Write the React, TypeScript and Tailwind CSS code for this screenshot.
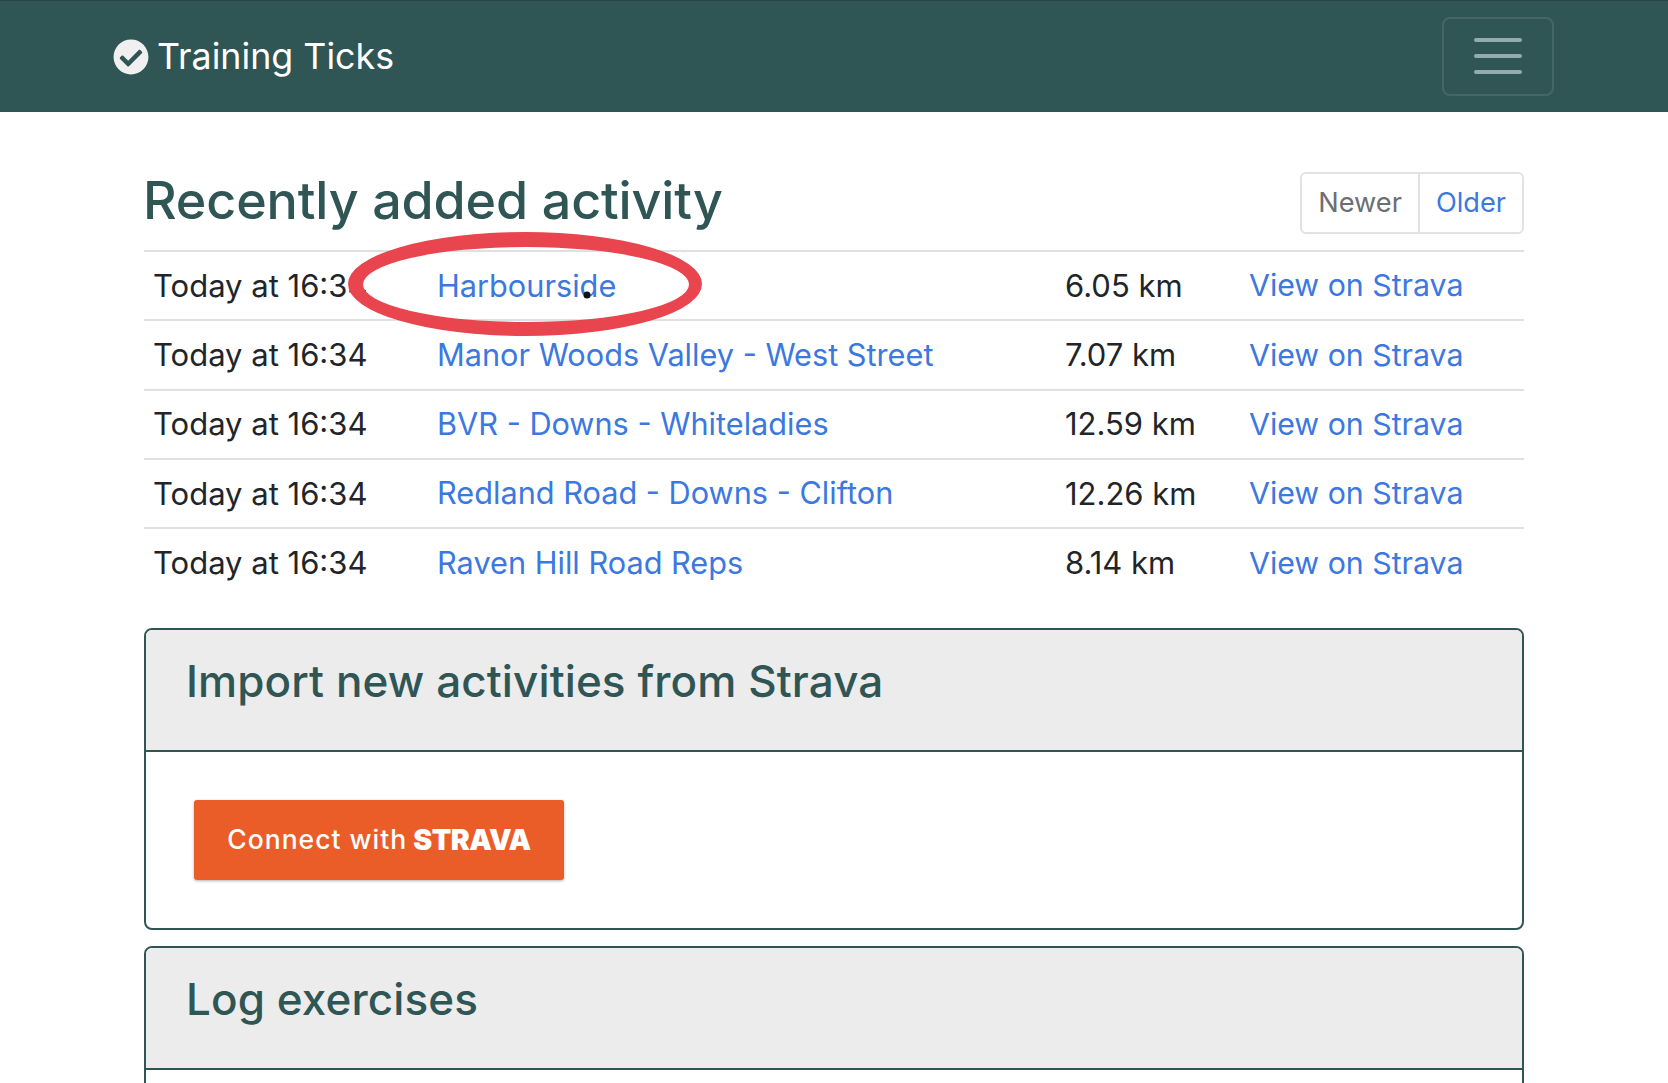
import React from "react";
import { FaCheckCircle } from "react-icons/fa";

const activities = [
  { time: "Today at 16:34", name: "Harbourside", distance: "6.05 km" },
  { time: "Today at 16:34", name: "Manor Woods Valley - West Street", distance: "7.07 km" },
  { time: "Today at 16:34", name: "BVR - Downs - Whiteladies", distance: "12.59 km" },
  { time: "Today at 16:34", name: "Redland Road - Downs - Clifton", distance: "12.26 km" },
  { time: "Today at 16:34", name: "Raven Hill Road Reps", distance: "8.14 km" },
];

export default function App() {
  return (
    <div className="relative h-[1083px] overflow-hidden bg-white text-[#212529] font-['Inter',sans-serif]">
      <nav className="h-[112px] bg-[#2f5555] border-t border-[#254645] flex items-center justify-between pl-[113px] pr-[114px]">
        <a className="flex items-center gap-[8px] text-white text-[35.8px]">
          <FaCheckCircle className="w-[36px] h-[36px] text-[#f0f0f0]" />
          <span className="-translate-y-[0.5px]">Training Ticks</span>
        </a>
        <button className="w-[112px] h-[79px] mb-[1px] rounded-lg border-2 border-white/10 flex flex-col items-center justify-center gap-[12px]">
          <span className="block w-[48px] h-[4px] rounded-sm bg-[#93abac]" />
          <span className="block w-[48px] h-[4px] rounded-sm bg-[#93abac]" />
          <span className="block w-[48px] h-[4px] rounded-sm bg-[#93abac]" />
        </button>
      </nav>

      <main className="mx-[144px] pt-[60px]">
        <div className="flex items-start justify-between h-[78px]">
          <h1 className="-ml-[1px] text-[52px] leading-[58px] font-medium text-[#2f5555] tracking-[-0.13px]">
            Recently added activity
          </h1>
          <div className="flex h-[62px] rounded-md border-2 border-[#e2e2e2] text-[27.2px]">
            <span className="flex items-center px-[16px] text-[#6c6f72] border-r-2 border-[#e2e2e2]">Newer</span>
            <a className="flex items-center px-[16px] text-[#3b78e0]">Older</a>
          </div>
        </div>

        <table className="w-full table-fixed text-[31px] border-collapse">
          <colgroup>
            <col className="w-[284px]" />
            <col className="w-[627px]" />
            <col className="w-[184px]" />
            <col />
          </colgroup>
          <tbody>
            {activities.map((a) => (
              <tr key={a.name} className="h-[69.25px] border-t-2 border-[#dfe0e1]">
                <td className="pl-[10px] pt-[1px] -translate-x-[1px]">{a.time}</td>
                <td className="pl-[9px] text-[30.7px] text-[#3b78e0]">{a.name}</td>
                <td className="pl-[10px] pt-[1px]">{a.distance}</td>
                <td className="pl-[10px] pt-[1px] text-[30.3px] text-[#3b78e0]">View on Strava</td>
              </tr>
            ))}
          </tbody>
        </table>

        <section className="mt-[31px] h-[302px] rounded-lg border-2 border-[#2f5555]">
          <h2 className="h-[122px] bg-[#ececec] rounded-t-md border-b-2 border-[#2f5555] px-[40px] pt-[23px] text-[44px] leading-[56px] font-medium text-[#2f5555] tracking-[0.1px]">
            Import new activities from Strava
          </h2>
          <div className="pt-[48px] pl-[48px]">
            <div className="w-[370px] h-[80px] rounded-[3px] bg-[#ea5d29] shadow-[0_1px_3px_rgba(0,0,0,0.3)] flex items-center justify-center gap-[6px] text-white">
              <span className="text-[26.5px] font-medium tracking-[1px]">Connect with</span>
              <span className="text-[28.5px] font-black tracking-[-0.5px]">STRAVA</span>
            </div>
          </div>
        </section>

        <section className="mt-[16px] h-[300px] rounded-lg border-2 border-[#2f5555]">
          <h2 className="h-[122px] bg-[#ececec] rounded-t-md border-b-2 border-[#2f5555] px-[40px] pt-[23px] text-[44px] leading-[56px] font-medium text-[#2f5555] tracking-[0.1px]">
            Log exercises
          </h2>
        </section>
      </main>

      {/* hand drawn annotation over the first row */}
      <svg className="absolute left-[340px] top-[225px]" width="370" height="120" viewBox="0 0 370 120">
        <path
          fillRule="evenodd"
          fill="#e8454e"
          d="M8 59a177 52 0 1 0 354 0a177 52 0 1 0 -354 0ZM23 59.500a163 37.500 0 1 0 326 0a163 37.500 0 1 0 -326 0Z"
        />
        <circle cx="247" cy="70" r="3.5" fill="#111" />
      </svg>
    </div>
  );
}
